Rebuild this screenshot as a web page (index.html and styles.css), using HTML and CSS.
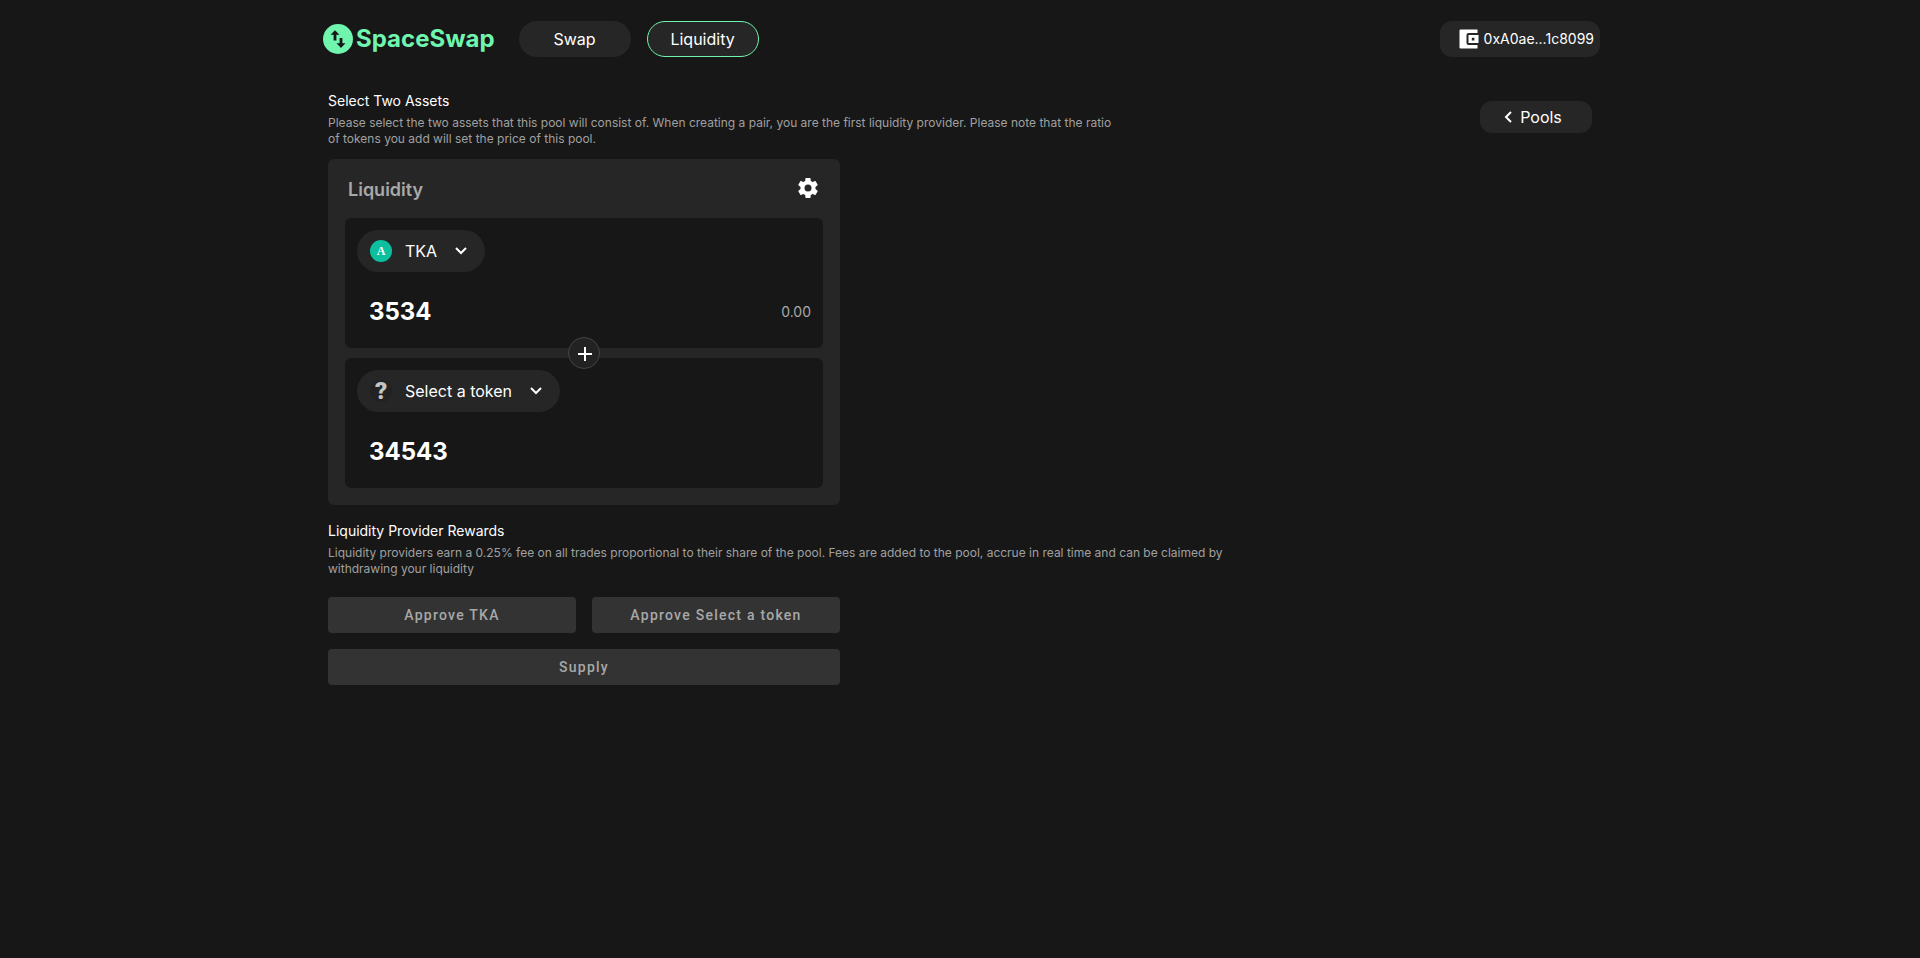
FILE: index.html
```html
<!DOCTYPE html>
<html lang="en">
<head>
<meta charset="utf-8">
<title>SpaceSwap</title>
<link rel="stylesheet" href="styles.css">
</head>
<body>
<header class="topbar">
  <a class="brand" href="#">
    <svg class="brand-icon" viewBox="0 0 30 30" aria-hidden="true"><circle cx="15" cy="15" r="15" fill="#6ff5ae"/><path d="M12 6.200 7.500 10.700h3.100v5.800h2.800v-5.800h3.100zM18 24l4.500-4.700h-3.100v-5.400h-2.800v5.400h-3.100z" fill="#171717"/></svg>
    <span>SpaceSwap</span>
  </a>
  <nav class="nav">
    <a class="nav-link" href="#">Swap</a>
    <a class="nav-link active" href="#" aria-current="page">Liquidity</a>
  </nav>
  <button class="wallet" type="button">
    <svg class="wallet-icon" viewBox="0 0 20 20" aria-hidden="true"><path fill="#fff" d="M1.500 .5h17V4H9.500Q7.500 4 7.500 6v8q0 2 2 2h9v3.500h-17Q.5 19.500 .5 18.500v-17Q.5 .5 1.500 .5z"/><path fill="#fff" fill-rule="evenodd" d="M9.500 6h10v8h-10zM12.800 8.800v2.600h2.600V8.800z"/></svg>
    <span>0xA0ae...1c8099</span>
  </button>
</header>
<main class="page">
  <div class="content">
    <section>
      <h1 class="heading">Select Two Assets</h1>
      <p class="note note-narrow">Please select the two assets that this pool will consist of. When creating a pair, you are the first liquidity provider. Please note that the ratio of tokens you add will set the price of this pool.</p>
    </section>
    <section class="card">
      <div class="card-head">
        <h2 class="card-title">Liquidity</h2>
        <button class="icon-button" type="button" aria-label="Settings"><svg class="gear" viewBox="0 0 24 24" aria-hidden="true"><path fill="#fff" d="M12 15.500A3.500 3.500 0 0 1 8.500 12 3.500 3.500 0 0 1 12 8.500a3.500 3.500 0 0 1 3.500 3.500 3.500 3.500 0 0 1-3.500 3.500m7.430-2.530c.04-.32.07-.64.07-.97s-.03-.66-.07-1l2.110-1.630c.19-.15.24-.42.12-.64l-2-3.460c-.12-.22-.39-.31-.61-.22l-2.490 1c-.52-.39-1.060-.73-1.690-.98l-.37-2.650A.506.506 0 0 0 14 2h-4c-.25 0-.46.18-.5.42l-.37 2.650c-.63.25-1.170.59-1.690.98l-2.490-1c-.22-.09-.49 0-.61.22l-2 3.460c-.13.22-.07.49.12.64L4.570 11c-.04.34-.07.67-.07 1s.03.65.07.97l-2.110 1.660c-.19.15-.25.42-.12.64l2 3.460c.12.22.39.3.61.22l2.490-1.010c.52.4 1.060.74 1.690.99l.37 2.650c.04.24.25.42.5.42h4c.25 0 .46-.18.5-.42l.37-2.650c.63-.26 1.170-.59 1.690-.99l2.490 1.010c.22.08.49 0 .61-.22l2-3.460c.12-.22.07-.49-.12-.64z"/></svg></button>
      </div>
      <div class="panels">
        <div class="panel">
          <button class="token" type="button">
            <span class="token-logo token-a">A</span>
            <span>TKA</span>
            <svg class="chevron" viewBox="0 0 12 8" aria-hidden="true"><path d="m1 1 5 5 5-5" fill="none" stroke="#fff" stroke-width="2"/></svg>
          </button>
          <div class="amount-row">
            <input class="amount" type="text" value="3534" aria-label="First token amount">
            <span class="balance">0.00</span>
          </div>
        </div>
        <div class="panel">
          <button class="token" type="button">
            <span class="token-logo token-unknown">?</span>
            <span>Select a token</span>
            <svg class="chevron" viewBox="0 0 12 8" aria-hidden="true"><path d="m1 1 5 5 5-5" fill="none" stroke="#fff" stroke-width="2"/></svg>
          </button>
          <div class="amount-row">
            <input class="amount" type="text" value="34543" aria-label="Second token amount">
          </div>
        </div>
        <span class="plus"><svg viewBox="0 0 16 16" aria-hidden="true"><path d="M9 2v14M2 9h14" stroke="#fff" stroke-width="2"/></svg></span>
      </div>
    </section>
    <section class="rewards">
      <h2 class="heading">Liquidity Provider Rewards</h2>
      <p class="note">Liquidity providers earn a 0.25% fee on all trades proportional to their share of the pool. Fees are added to the pool, accrue in real time and can be claimed by withdrawing your liquidity</p>
    </section>
    <div class="actions">
      <button class="action" type="button" disabled>Approve TKA</button>
      <button class="action" type="button" disabled>Approve Select a token</button>
      <button class="action wide" type="button" disabled>Supply</button>
    </div>
  </div>
  <a class="pools" href="#">
    <svg class="back" viewBox="0 0 8 12" aria-hidden="true"><path d="M7 1 2 6l5 5" fill="none" stroke="#fff" stroke-width="2"/></svg>
    <span>Pools</span>
  </a>
</main>
</body>
</html>
```

FILE: styles.css
```css
* { box-sizing: border-box; }
body {
  margin: 0;
  background: #171717;
  color: #fff;
  font-family: Inter, "Liberation Sans", sans-serif;
  font-size: 16px;
}
h1, h2, p { margin: 0; }
a { color: inherit; text-decoration: none; }
button, input { font: inherit; color: inherit; border: 0; padding: 0; }
svg { display: block; }

.topbar {
  display: flex;
  align-items: center;
  max-width: 1280px;
  height: 78px;
  margin: 0 auto;
  padding-left: 3px;
}
.brand {
  display: flex;
  align-items: center;
  gap: 3px;
  color: #6ff5ae;
  font-size: 24px;
  font-weight: 700;
  line-height: 28px;
}
.brand-icon { width: 30px; height: 30px; }
.nav { display: flex; gap: 16px; margin-left: 24px; }
.nav-link {
  display: flex;
  align-items: center;
  justify-content: center;
  width: 112px;
  height: 36px;
  border-radius: 18px;
  background: #262626;
}
.nav-link.active { border: 1px solid #6ff5ae; }
.wallet {
  display: flex;
  align-items: center;
  justify-content: flex-end;
  gap: 5px;
  min-width: 160px;
  height: 36px;
  margin-left: auto;
  padding: 0 6px;
  border-radius: 12px;
  background: #262626;
  font-size: 14px;
  line-height: 16px;
}
.wallet-icon { width: 20px; height: 20px; }

.page {
  display: flex;
  align-items: flex-start;
  justify-content: space-between;
  max-width: 1280px;
  margin: 0 auto;
  padding: 12px 8px;
}
.content { max-width: 900px; }
.heading { font-size: 14px; font-weight: 400; line-height: 22px; margin-bottom: 3px; }
.note { color: #a0a0a0; font-size: 12px; line-height: 16px; }
.note-narrow { max-width: 792px; }
.pools {
  display: flex;
  align-items: center;
  justify-content: center;
  gap: 8px;
  width: 112px;
  height: 32px;
  margin-top: 11px;
  padding-right: 6px;
  border-radius: 12px;
  background: #262626;
}
.back { width: 8px; height: 12px; }

.card {
  max-width: 512px;
  margin-top: 12px;
  padding: 17px;
  border-radius: 6px;
  background: #262626;
}
.card-head {
  display: flex;
  justify-content: space-between;
  padding: 0 3px;
  height: 42px;
}
.card-title { color: #a8a8a8; font-size: 18px; font-weight: 600; line-height: 28px; }
.icon-button { height: 22px; background: none; }
.gear { width: 24px; height: 24px; }
.panels { position: relative; display: grid; gap: 10px; }
.panel { padding: 12px; border-radius: 6px; background: #171717; }
.token {
  display: inline-flex;
  align-items: center;
  height: 42px;
  padding: 0 18px 0 13px;
  border-radius: 21px;
  background: #262626;
}
.token-logo {
  display: flex;
  align-items: center;
  justify-content: center;
  width: 22px;
  height: 22px;
  margin-right: 13px;
  border-radius: 50%;
}
.token-a { background: #0bbf9f; font: 700 12px "Liberation Serif", serif; }
.token-unknown { color: #c4c4c4; background: #222; font: 900 24px Roboto, sans-serif; }
.chevron { width: 12px; height: 8px; margin-left: 18px; }
.amount-row {
  display: flex;
  align-items: center;
  justify-content: space-between;
  height: 40px;
  margin-top: 19px;
  margin-bottom: 5px;
  padding-left: 12px;
}
.amount { flex: 1; min-width: 0; background: none; outline: 0; font-size: 24px; font-weight: 700; }
.balance { color: #a8a8a8; font-size: 14px; }
.plus {
  position: absolute;
  top: 50%;
  left: 50%;
  display: grid;
  place-items: center;
  width: 32px;
  height: 32px;
  margin: -16px;
  border: 1px solid #444;
  border-radius: 50%;
  background: #222;
}
.plus svg { width: 16px; height: 16px; }

.rewards { margin-top: 15px; }
.actions {
  display: grid;
  grid-template-columns: 1fr 1fr;
  gap: 16px;
  max-width: 512px;
  margin-top: 20px;
}
.action {
  height: 36px;
  border-radius: 4px;
  background: #333;
  color: #a8a8a8;
  font-family: Roboto, sans-serif;
  font-size: 14px;
  font-weight: 500;
  letter-spacing: 1.25px;
}
.action.wide { grid-column: 1 / -1; }
```
